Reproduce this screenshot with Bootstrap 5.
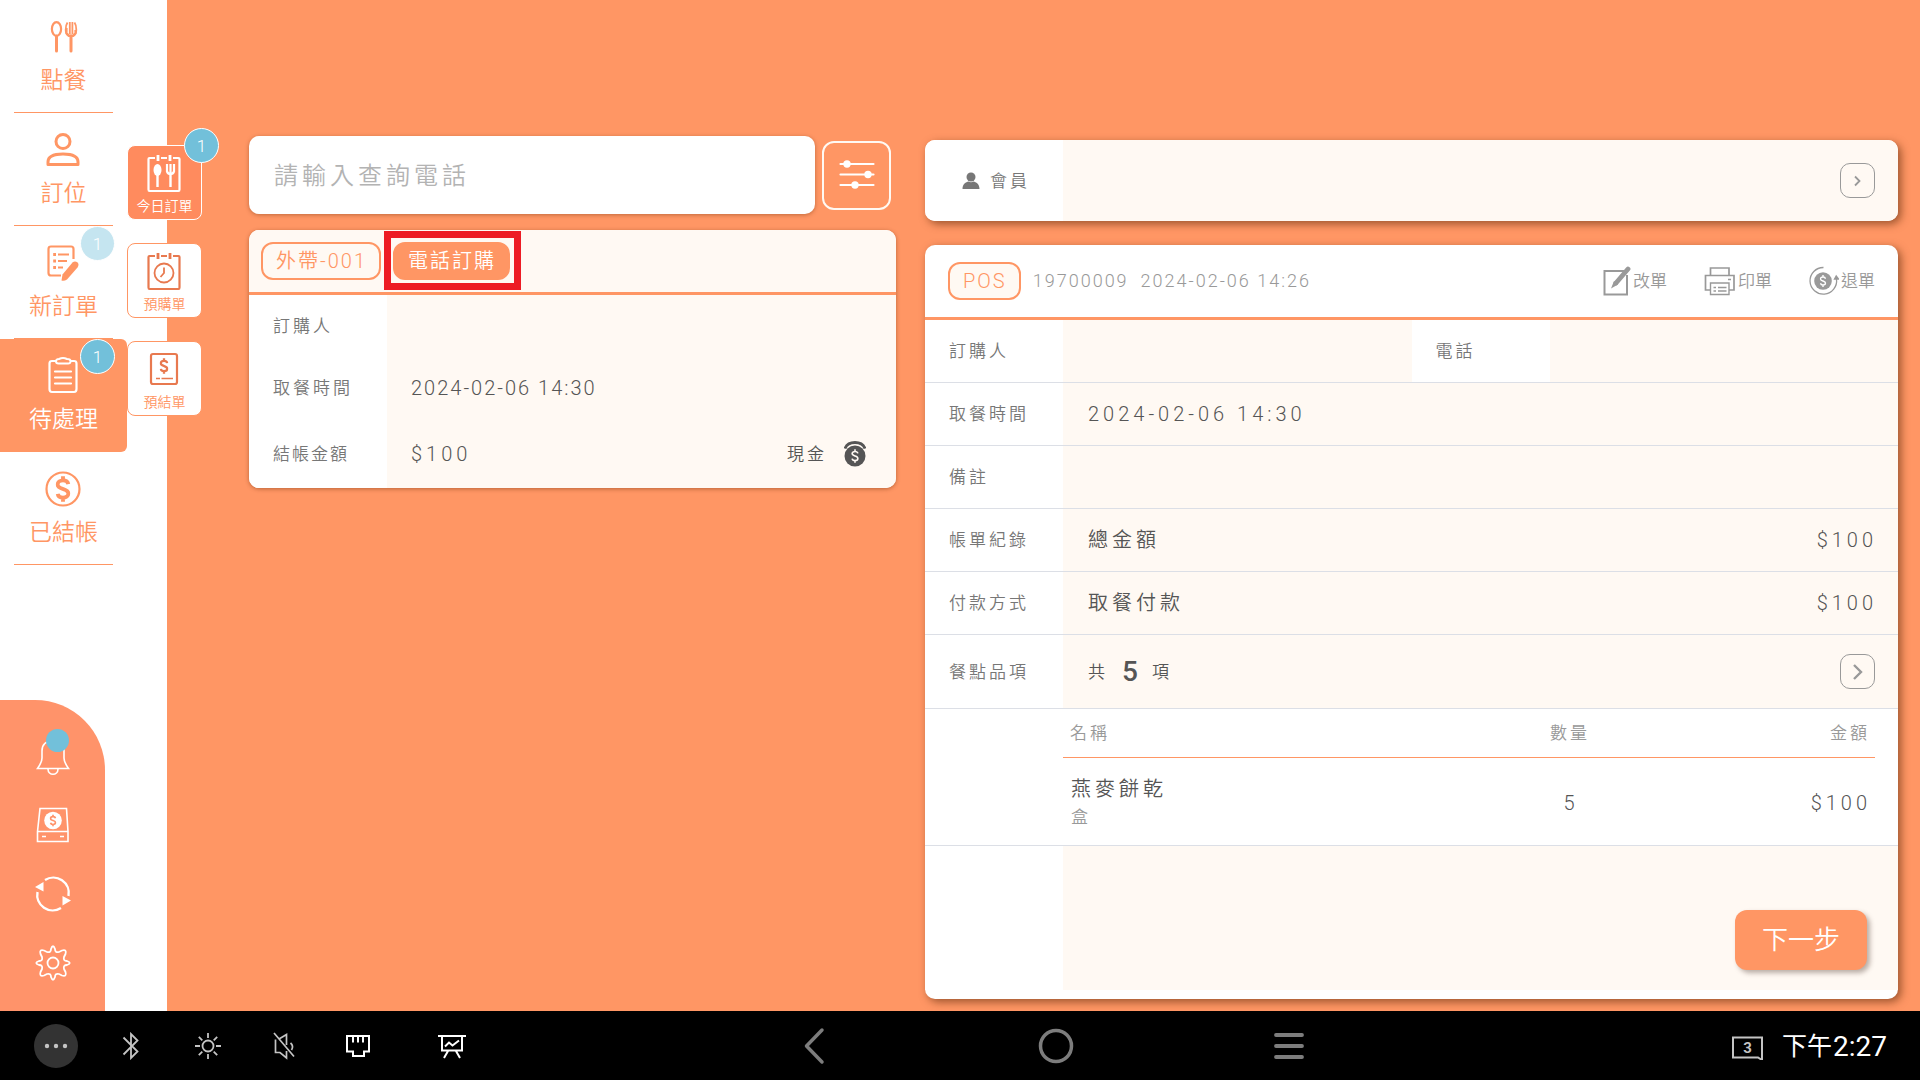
<!DOCTYPE html>
<html lang="zh-Hant">
<head>
<meta charset="utf-8">
<meta name="viewport" content="width=device-width, initial-scale=1">
<title>待處理訂單</title>
<link rel="stylesheet" href="https://cdn.jsdelivr.net/npm/bootstrap@5.3.0/dist/css/bootstrap.min.css">
<style>
:root{--orange:#ff9664;--cream:#fff9f3;--blue:#72c0da;--rule:#dcdfe6;--label:#777;--value:#555;--muted:#999}
body{font-family:Roboto,"Noto Sans CJK TC",sans-serif;font-weight:350;font-size:17px;line-height:24px;color:var(--value);background:var(--orange)}
svg{display:block;flex:none;fill:none;stroke:currentColor}
.btn{--bs-btn-font-weight:350;--bs-btn-line-height:24px}
.sub-btn{font-weight:350}

/* side navigation */
.side{width:167px;background:#fff}
.side-nav{width:127px}
.side-link{height:113px;color:var(--orange);font-size:23px;line-height:34px;text-decoration:none;padding-top:17px;gap:7px}
.side-link::after{content:"";position:absolute;left:14px;right:14px;bottom:0;height:1px;background:var(--orange)}
.side-link.active{background:var(--orange);color:#fff;border-radius:0 6px 6px 0}
.count{width:35px;height:35px;border-radius:50%;background:var(--blue);border:1px solid #fff;color:#fff;font-size:17px;line-height:24px}
.side-link .count{top:0;right:12px}
.count.faded{background:#c5e5f0}
.tools{width:105px;height:311px;background:#ff936a;border-radius:0 70px 0 0;padding-top:33px;gap:23px}
.tools .btn{color:#fff;width:46px;height:46px}
.dot{width:23px;height:23px;border-radius:50%;background:var(--blue);top:-5px;right:6px}
.sub-nav{left:127px;top:145px;gap:23px}
.sub-btn{width:75px;height:75px;border:1px solid var(--orange);border-radius:8px;background:#fff;color:var(--orange);font-size:14px;line-height:20px;padding:7px 0 4px;gap:3px}
.sub-btn svg{color:#e8794f}
.sub-btn.active{background:#ff8b5e;border-color:#fff;color:#fff}
.sub-btn.active svg{color:#fff}
.sub-btn .count{top:-18px;right:-18px}

/* order list */
.work{padding:136px 22px 12px 82px;gap:29px}
.col-list{flex:647 1 0}
.col-detail{flex:973 1 0;padding-top:4px;gap:24px}
.search-form{gap:7px}
.search-box{height:78px;border:0;border-radius:10px;font-size:24px;font-weight:350;letter-spacing:4px;padding:2px 25px 0;box-shadow:0 1px 4px rgba(100,40,0,.4)}
.search-box::placeholder{color:#b3b3b3;opacity:1}
.filter-btn{width:69px;height:69px;border:2px solid var(--cream);border-radius:12px;color:#fff;margin-right:5px}
.panel{border-radius:10px;background:#fff;box-shadow:0 1px 4px rgba(100,40,0,.45);overflow:hidden}
.panel-deep{box-shadow:3px 3px 9px rgba(90,40,10,.6)}
.pill{height:38px;border:2px solid var(--orange);border-radius:12px;color:var(--orange);background:var(--cream);font-size:20px;letter-spacing:2px;padding:0 12px 0 13px}
.pill.solid{background:var(--orange);color:#fff}
.order-head{height:65px;background:var(--cream);border-bottom:3px solid var(--orange);padding:0 12px;gap:12px}
.marker{inset:-11px -11px -10px -9px;border:7px solid #ed1c24;pointer-events:none}
.cell-label{width:138px;flex:none;color:var(--label);letter-spacing:3px;padding-left:24px;background:#fff}
.cell-tight{letter-spacing:2px}
.cell-value{background:var(--cream);flex:1;padding:0 23px 0 25px;font-size:20px;letter-spacing:4px}
.list-row{height:62px}
.list-row .cell-value{padding-right:30px;padding-left:24px}
.list-row.tall{height:69px}
.fs-label{font-size:17px}
.ls-date{letter-spacing:2px}
.ls-label{letter-spacing:3px}
.cash{gap:17px}

/* order detail */
.member{height:81px}
.member .cell-label{padding-left:35px}
.go-btn{width:35px;height:35px;border:1px solid var(--muted);border-radius:10px;color:var(--muted)}
.detail-head{height:75px;border-bottom:3px solid var(--orange);padding:0 23px}
.meta{color:var(--muted);font-size:18px;letter-spacing:2px;gap:12px}
.acts{gap:37px}
.acts .btn{color:var(--muted);font-size:17px;gap:2px}
.detail-row{height:63px;border-bottom:1px solid var(--rule)}
.detail-row.tall{height:74px}
.pull{margin-right:-2px}
.sum{gap:14px}
.total{font-size:28px;font-weight:500;letter-spacing:0}
.detail-body{padding-bottom:9px}
.items-row{border-bottom:1px solid var(--rule)}
.items{margin:0 23px 0 0;letter-spacing:3px}
.items th{height:48px;padding:0 5px 0 7px;font-weight:350;color:var(--muted);border-bottom:1px solid var(--orange);vertical-align:middle}
.items td{height:88px;padding:3px 4px 0 8px;font-size:20px;letter-spacing:4px;vertical-align:middle}
.items .unit{font-size:17px;color:var(--muted);margin-top:4px}
.items .qty{width:140px}
.items .amount{width:236px}
.foot{padding:0 31px 20px 0 !important}
.next-btn{width:132px;height:60px;border:0;border-radius:12px;background:var(--orange);color:#fff;font-size:26px;box-shadow:3px 3px 5px rgba(80,60,50,.4)}

/* system bar */
.sysbar{height:69px;background:#000;color:#c4c4c4;padding:0 33px 0 34px}
.sysbar .btn{color:inherit}
.more{width:44px;height:44px;border-radius:50%;background:#333}
.sys-left{flex:769 1 0}
.sys-right{flex:583 1 0}
.status{gap:47px}
.status-first{margin-right:32px}
.sys-mid{color:#7d7d7d;gap:200px}
.back-btn{width:35px}
.clock{color:#fff;font-weight:400;font-size:28px;gap:1px;padding-top:3px}
.clock span{font-size:25px}
</style>
</head>
<body>
<!-- glyph shared by every coin icon -->
<svg width="0" height="0" class="position-absolute"><defs>
<symbol id="dollar" viewBox="0 0 14 24"><path d="M12 7.5C11.500 5 9.500 4 7 4 4 4 2 5.500 2 7.800 2 10.500 4.500 11.200 7 12 9.500 12.800 12 13.500 12 16.200 12 18.500 10 20 7 20 4.500 20 2.500 19 2 16.500M7 0V4M7 20V24" fill="none" stroke="currentColor"/></symbol>
</defs></svg>

<div class="d-flex flex-column min-vh-100">
<div class="d-flex flex-grow-1 position-relative">

  <aside class="side d-flex flex-column justify-content-between flex-shrink-0">
    <nav class="side-nav d-flex flex-column">
      <a href="#" class="side-link position-relative d-flex flex-column align-items-center">
        <svg width="40" height="40" viewBox="1 0 40 40" stroke-width="2.200"><ellipse cx="13.500" cy="12" rx="4.600" ry="6.800"/><path d="M13.500 19V34" stroke-width="3" stroke-linecap="round"/><path d="M28 19V34" stroke-width="3" stroke-linecap="round"/><path d="M24.500 5.500C22 9 22 17 25 18.500H31C34 17 34 9 31.500 5.500M26.800 5V17M29.400 5V17" stroke-width="1.800"/><path d="M23.500 11V16L26 19H30L32.500 16V13"/></svg>
        <span>點餐</span></a>
      <a href="#" class="side-link position-relative d-flex flex-column align-items-center">
        <svg width="40" height="40" viewBox="1 0 40 40" stroke-width="3"><circle cx="20" cy="11.500" r="7"/><path d="M5 34.500V32C5 26.500 11 24 20 24S35 26.500 35 32V34.500Z" stroke-linejoin="round"/></svg>
        <span>訂位</span></a>
      <a href="#" class="side-link position-relative d-flex flex-column align-items-center">
        <svg width="40" height="40" viewBox="1 0 40 40" stroke-width="2.200"><path d="M18 32.500H8Q5.500 32.500 5.500 30V6Q5.500 3.500 8 3.500H28Q30.500 3.500 30.500 6V16"/><path d="M15 11.500H26M15 18H24M15 24.500H20"/><path d="M10.200 11.500H13M10.200 18H13M10.200 24.500H13" stroke-width="3"/><path d="M18.500 37.500L19.500 31.500 29.500 19.500Q32 17.500 34.500 19.500 36.500 21.500 34.500 24.500L24 36.500Q21 38.500 18.500 37.500Z" fill="currentColor" stroke="none"/></svg>
        <span>新訂單</span><span class="count faded position-absolute d-flex align-items-center justify-content-center">1</span></a>
      <a href="#" class="side-link active position-relative d-flex flex-column align-items-center" aria-current="page">
        <svg width="40" height="40" viewBox="1 0 40 40" stroke-width="2.200"><path d="M13 5H9Q6.500 5 6.500 7.500V33Q6.500 36 9 36H31Q33.500 36 33.500 33V7.500Q33.500 5 31 5H27"/><path d="M16 3Q20 1 24 3 27.500 3 27.500 5.300T25 7.500H15.500Q13 7.500 13 5.300T16 3Z" stroke-width="2"/><path d="M12 15.500H28M12 21.500H28M12 27.500H28" stroke-linecap="round"/></svg>
        <span>待處理</span><span class="count position-absolute d-flex align-items-center justify-content-center">1</span></a>
      <a href="#" class="side-link position-relative d-flex flex-column align-items-center">
        <svg width="40" height="40" viewBox="1 0 40 40" stroke-width="2.200"><circle cx="20" cy="20" r="16.500"/><use href="#dollar" x="12.500" y="7" width="15" height="26" stroke-width="3.600"/></svg>
        <span>已結帳</span></a>
    </nav>
    <div class="tools d-flex flex-column align-items-center">
      <button type="button" class="btn p-0 position-relative d-flex align-items-center justify-content-center" aria-label="通知"><svg width="34" height="40" viewBox="0 0 34 40" stroke-width="1.600"><path d="M1.500 32.500C4.500 28 6 26 6 22V15C6 8 10 5 17 5S28 8 28 15V22C28 26 29.500 28 32.500 32.500Z"/><path d="M12 33C12 40 22 40 22 33"/></svg><span class="dot position-absolute"></span></button>
      <button type="button" class="btn p-0 d-flex align-items-center justify-content-center" aria-label="錢箱"><svg width="34" height="36" viewBox="0 0 34 36" stroke-width="1.600"><path d="M1.500 24.500L4 1.500H30.500L32 24.500V34.500H1.500ZM1.500 24.500H32"/><path d="M6 29.500H10M24 29.500H28"/><circle cx="17" cy="13.500" r="8.800" fill="currentColor" stroke="none"/><g color="#ff936a"><use href="#dollar" x="13.500" y="7.500" width="7" height="12" stroke-width="3.500"/></g></svg></button>
      <button type="button" class="btn p-0 d-flex align-items-center justify-content-center" aria-label="同步"><svg width="36" height="36" viewBox="0 0 36 36" stroke-width="2.400"><path d="M10 4A15.500 15.500 0 0 1 33.500 20M26 32A15.500 15.500 0 0 1 2.500 16"/><path d="M0 11L8.500 6V15.500ZM36 24.500L27.500 29.500V20Z" fill="currentColor" stroke="none"/></svg></button>
      <button type="button" class="btn p-0 d-flex align-items-center justify-content-center" aria-label="設定"><svg width="36" height="36" viewBox="0 0 36 36" stroke-width="1.800" stroke-linejoin="round"><circle cx="18" cy="18" r="5.500"/><path d="M16 4Q18 -1.500 20 4 20 8 24 7L27 5.500Q32 4 30.500 9L29 12Q28 16 32 16 37.500 18 32 20 28 20 29 24L30.500 27Q32 32 27 30.500L24 29Q20 28 20 32 18 37.500 16 32 16 28 12 29L9 30.500Q4 32 5.500 27L7 24Q8 20 4 20 -1.500 18 4 16 8 16 7 12L5.500 9Q4 4 9 5.500L12 7Q16 8 16 4Z"/></svg></button>
    </div>
  </aside>

  <nav class="sub-nav position-absolute d-flex flex-column">
    <button type="button" class="sub-btn active position-relative d-flex flex-column align-items-center">
      <svg width="36" height="40" viewBox="1 0 36 40" stroke-width="2.200"><path d="M9 5H3.500Q2.500 5 2.500 6V36.500Q2.500 38 3.500 38H32.500Q33.500 38 33.500 36.500V6Q33.500 5 32.500 5H27M15 5H21"/><path d="M12 2V8M24 2V8" stroke-width="2.800"/><ellipse cx="11.500" cy="17" rx="4" ry="6" fill="currentColor" stroke="none"/><path d="M11.500 20V34M24.500 20V34" stroke-width="2.400"/><path d="M21 11V18.500Q22 21 24.500 21T28 18.500V11M24.500 11V20"/></svg>
      <span>今日訂單</span><span class="count position-absolute d-flex align-items-center justify-content-center">1</span></button>
    <button type="button" class="sub-btn d-flex flex-column align-items-center">
      <svg width="36" height="40" viewBox="1 0 36 40" stroke-width="2.200"><path d="M9 5H3.500Q2.500 5 2.500 6V36.500Q2.500 38 3.500 38H32.500Q33.500 38 33.500 36.500V6Q33.500 5 32.500 5H27M15 5H21"/><path d="M12 2V8M24 2V8" stroke-width="2.800"/><circle cx="18" cy="22" r="9.500" stroke-width="1.800"/><path d="M18 16.500V22L14.500 26" stroke-width="1.800"/></svg>
      <span>預購單</span></button>
    <button type="button" class="sub-btn d-flex flex-column align-items-center">
      <svg width="36" height="40" viewBox="1 0 36 40" stroke-width="2.200"><rect x="5" y="5" width="26" height="30" rx="2"/><path d="M10 29.500H14M15.500 29.500H27" stroke-width="1.400"/><use href="#dollar" x="13.500" y="8.500" width="9" height="17" stroke-width="3.600"/></svg>
      <span>預結單</span></button>
  </nav>

  <main class="work d-flex flex-grow-1">
    <section class="col-list d-flex flex-column gap-3">
      <form class="search-form d-flex align-items-center justify-content-between" onsubmit="return false">
        <input type="search" class="form-control search-box" placeholder="請輸入查詢電話" aria-label="查詢電話">
        <button type="button" class="btn filter-btn p-0 d-flex align-items-center justify-content-center flex-shrink-0" aria-label="篩選"><svg width="36" height="30" viewBox="0 0 36 30" stroke-width="2.200" stroke-linecap="round"><path d="M1.500 4H34.500M1.500 14.500H34.500M1.500 25H34.500"/><g fill="currentColor" stroke="none"><circle cx="8" cy="4" r="3.700"/><circle cx="29" cy="14.500" r="3.700"/><circle cx="16" cy="25" r="3.700"/></g></svg></button>
      </form>
      <article class="panel">
        <header class="order-head d-flex align-items-center">
          <span class="pill d-flex align-items-center">外帶-001</span>
          <span class="position-relative"><span class="pill solid d-flex align-items-center">電話訂購</span><span class="marker position-absolute"></span></span>
        </header>
        <div class="list-row d-flex"><div class="cell-label d-flex align-items-center">訂購人</div><div class="cell-value"></div></div>
        <div class="list-row d-flex"><div class="cell-label d-flex align-items-center">取餐時間</div><div class="cell-value ls-date d-flex align-items-center">2024-02-06 14:30</div></div>
        <div class="list-row tall d-flex"><div class="cell-label cell-tight d-flex align-items-center">結帳金額</div>
          <div class="cell-value d-flex align-items-center justify-content-between"><span>$100</span>
            <span class="cash fs-label ls-label d-flex align-items-center">現金<svg width="22" height="26" viewBox="0 0 22 26"><path d="M1 7.500C4 -.5 18 -.5 21 7.500" stroke-width="2.800"/><circle cx="11" cy="15" r="10.500" fill="currentColor" stroke="none"/><g color="#fff9f3"><use href="#dollar" x="7" y="8" width="8" height="14" stroke-width="2.800"/></g></svg></span></div></div>
      </article>
    </section>

    <section class="col-detail d-flex flex-column">
      <div class="panel panel-deep member d-flex flex-shrink-0">
        <div class="cell-label d-flex align-items-center gap-2"><svg width="22" height="20" viewBox="0 0 22 20"><g fill="currentColor" stroke="none"><circle cx="11" cy="6" r="4.500"/><path d="M2.500 18C2.500 13 6 11 8.500 10.500Q11 12 13.500 10.500C16 11 19.500 13 19.500 18Z"/></g></svg>會員</div>
        <div class="cell-value d-flex align-items-center justify-content-end"><button type="button" class="btn go-btn p-0 d-flex align-items-center justify-content-center" aria-label="選擇會員"><svg width="12" height="12" viewBox="1 0 12 12" stroke-width="1.800"><path d="M4 1.500L8.500 6 4 10.500"/></svg></button></div>
      </div>

      <article class="panel panel-deep detail-body d-flex flex-column flex-grow-1">
        <header class="detail-head d-flex align-items-center justify-content-between">
          <div class="meta d-flex align-items-center"><span class="pill d-flex align-items-center">POS</span><span>19700009</span><span>2024-02-06 14:26</span></div>
          <div class="acts d-flex align-items-center">
            <button type="button" class="btn p-0 border-0 d-flex align-items-center"><svg width="28" height="30" viewBox="0 0 28 30" stroke-width="2"><path d="M21 5H1.500V28.500H24V9"/><path d="M25 3L13 17" stroke-width="4.800" stroke-linecap="round"/><path d="M11 15L8 22.500 15 18.500Z" fill="currentColor" stroke="none"/></svg>改單</button>
            <button type="button" class="btn p-0 border-0 d-flex align-items-center"><svg width="32" height="30" viewBox="0 0 32 30" stroke-width="1.700"><path d="M6.500 9.500V2H25V9.500M6.500 24H1.500V9.500H30V24H25"/><path d="M6.500 17H25V28.500H6.500ZM9.500 21.500H12M14 21.500H22.500M9.500 25H12M14 25H22.500M24 13.500H27" stroke-width="1.400"/></svg>印單</button>
            <button type="button" class="btn p-0 border-0 d-flex align-items-center"><svg width="30" height="30" viewBox="0 0 30 30" stroke-width="1.300"><path d="M14.500 1.500A13.300 13.300 0 1 0 27.500 13"/><path d="M25.500 13L27.200 10 29.500 13Z" fill="currentColor"/><circle cx="14" cy="15" r="8.800" fill="currentColor" stroke="none"/><g color="#fff"><use href="#dollar" x="10.500" y="8.500" width="7" height="13" stroke-width="2.800"/></g></svg>退單</button>
          </div>
        </header>
        <div class="detail-row d-flex"><div class="cell-label d-flex align-items-center">訂購人</div><div class="cell-value"></div><div class="cell-label d-flex align-items-center">電話</div><div class="cell-value"></div></div>
        <div class="detail-row d-flex"><div class="cell-label d-flex align-items-center">取餐時間</div><div class="cell-value d-flex align-items-center">2024-02-06 14:30</div></div>
        <div class="detail-row d-flex"><div class="cell-label d-flex align-items-center">備註</div><div class="cell-value"></div></div>
        <div class="detail-row d-flex"><div class="cell-label d-flex align-items-center">帳單紀錄</div><div class="cell-value d-flex align-items-center justify-content-between"><span>總金額</span><span class="pull">$100</span></div></div>
        <div class="detail-row d-flex"><div class="cell-label d-flex align-items-center">付款方式</div><div class="cell-value d-flex align-items-center justify-content-between"><span>取餐付款</span><span class="pull">$100</span></div></div>
        <div class="detail-row tall d-flex"><div class="cell-label d-flex align-items-center">餐點品項</div>
          <div class="cell-value d-flex align-items-center justify-content-between"><span class="sum fs-label d-flex align-items-center"><span class="ls-label">共</span><span class="total">5</span><span>項</span></span>
            <button type="button" class="btn go-btn p-0 d-flex align-items-center justify-content-center" aria-label="展開品項"><svg width="16" height="16" viewBox="1 0 16 16" stroke-width="2.400"><path d="M5 1L12 8 5 15"/></svg></button></div></div>
        <div class="items-row d-flex"><div class="cell-label"></div>
          <table class="items flex-grow-1">
            <thead><tr><th scope="col">名稱</th><th scope="col" class="qty text-center">數量</th><th scope="col" class="amount text-end">金額</th></tr></thead>
            <tbody><tr><td>燕麥餅乾<div class="unit">盒</div></td><td class="qty text-center">5</td><td class="amount text-end">$100</td></tr></tbody>
          </table></div>
        <div class="d-flex flex-grow-1"><div class="cell-label"></div><div class="cell-value foot d-flex align-items-end justify-content-end"><button type="button" class="btn next-btn p-0">下一步</button></div></div>
      </article>
    </section>
  </main>
</div>

<footer class="sysbar d-flex align-items-center">
  <div class="sys-left d-flex align-items-center">
    <button type="button" class="btn more p-0 border-0 d-flex align-items-center justify-content-center" aria-label="更多"><svg width="24" height="6" viewBox="0 0 24 6"><g fill="currentColor" stroke="none"><circle cx="3" cy="3" r="2.200"/><circle cx="12" cy="3" r="2.200"/><circle cx="21" cy="3" r="2.200"/></g></svg></button>
    <svg class="ms-4 status-first" width="60" height="28" viewBox="0 0 60 28" stroke-width="1.800"><path d="M21.500 5.500L35.500 19.500 29 26V2L35.500 8.500 21.500 22.500"/></svg>
    <div class="status d-flex align-items-center">
      <svg width="28" height="28" viewBox="0 0 28 28" stroke-width="1.800"><circle cx="14" cy="14" r="5.500"/><path d="M14 1V6M14 22V27M1 14H6M22 14H27M4.800 4.800L8.300 8.300M19.700 19.700L23.200 23.200M23.200 4.800L19.700 8.300M8.300 19.700L4.800 23.200"/></svg>
      <svg width="28" height="28" viewBox="0 0 28 28" stroke-width="1.700"><path d="M5 1L25 24.500M6.500 7.500V20.500H11L17.500 26V19M10 7L17.500 2.500V13M21.500 11Q25 14 22.500 18"/></svg>
      <svg class="text-white" width="28" height="28" viewBox="0 0 28 28" stroke-width="2"><path d="M3 4H25V19.500H20V24H9V19.500H3ZM9 4V10.500M14 4V10.500M19 4V10.500"/></svg>
      <svg class="text-white" width="60" height="28" viewBox="0 0 60 28" stroke-width="2"><path d="M19 4H47M23 4V18.500H43V4M29 19L25 26M37 19L41 26M26 14.500L30 10.500 33.500 13.500 40 8.500"/></svg>
    </div>
  </div>
  <div class="sys-mid d-flex align-items-center">
    <button type="button" class="btn back-btn p-0 border-0" aria-label="返回"><svg width="24" height="38" viewBox="0 0 24 38" stroke-width="3.500" stroke-linecap="round" stroke-linejoin="round"><path d="M19 3L3.500 19 19 35"/></svg></button>
    <button type="button" class="btn p-0 border-0" aria-label="主畫面"><svg width="36" height="36" viewBox="0 0 36 36" stroke-width="3.500"><circle cx="18" cy="18" r="15.500"/></svg></button>
    <button type="button" class="btn p-0 border-0" aria-label="選單"><svg width="30" height="30" viewBox="0 0 30 30" stroke-width="3.800" stroke-linecap="round"><path d="M2 4H28M2 15H28M2 26H28"/></svg></button>
  </div>
  <div class="sys-right d-flex align-items-center justify-content-end gap-3">
    <svg width="36" height="28" viewBox="0 0 36 28" stroke-width="2"><path d="M3 5.500H32V28L28 25.500H3Z"/><text x="17.500" y="21" text-anchor="middle" font-size="15" font-weight="700" fill="currentColor" stroke="none">3</text></svg>
    <div class="clock d-flex align-items-center"><span>下午</span>2:27</div>
  </div>
</footer>
</div>
<script src="https://cdn.jsdelivr.net/npm/bootstrap@5.3.0/dist/js/bootstrap.bundle.min.js"></script>
</body>
</html>
